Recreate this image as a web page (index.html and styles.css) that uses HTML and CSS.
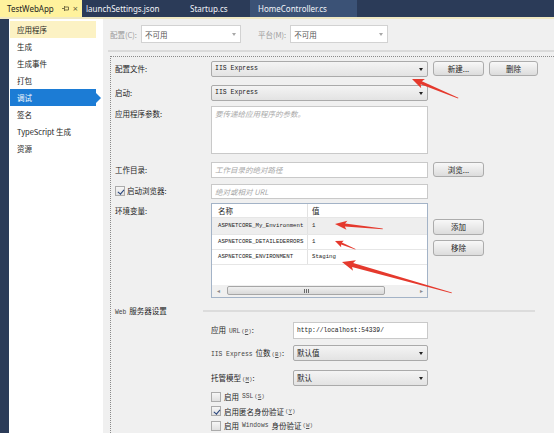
FILE: index.html
```html
<!DOCTYPE html>
<html lang="zh-CN">
<head>
  <meta charset="UTF-8">
  <meta name="viewport" content="width=device-width, initial-scale=1.0">
  <title>TestWebApp - 调试</title>
  <link rel="stylesheet" href="styles.css">
</head>
<body>
<!-- Document tabs -->
<div class="tabbar">
  <div class="tab tab-active">
    <span>TestWebApp</span>
    <svg class="pin" width="7" height="7" viewBox="0 0 7 7">
      <path d="M0 3.5H2.5M2.5 1V6M2.5 2H6.5V5H2.5" fill="none" stroke="#6d6540" stroke-width="0.9"/>
    </svg>
    <span class="close">×</span>
  </div>
  <div class="tab tab-launch">launchSettings.json</div>
  <div class="tab tab-startup">Startup.cs</div>
  <div class="tab tab-home">HomeController.cs</div>
</div>
<div class="tab-line"></div>

<div class="workspace">
  <div class="edge"></div>

  <!-- Project property pages -->
  <ul class="nav">
    <li class="current">应用程序</li>
    <li>生成</li>
    <li>生成事件</li>
    <li>打包</li>
    <li class="active">调试</li>
    <li>签名</li>
    <li>TypeScript 生成</li>
    <li>资源</li>
  </ul>

  <div class="page">
    <div class="config-bar">
      <span class="bar-label">配置(C):</span>
      <div class="combo combo-off">不可用</div>
      <span class="bar-label bar-gap">平台(M):</span>
      <div class="combo combo-off combo-narrow">不可用</div>
    </div>

    <div class="sheet">
      <div class="row">
        <span class="label">配置文件:</span>
        <div class="combo field"><span class="mono">IIS Express</span></div>
        <div class="btn">新建...</div>
        <div class="btn btn-narrow">删除</div>
      </div>

      <div class="row row-8">
        <span class="label">启动:</span>
        <div class="combo field"><span class="mono">IIS Express</span></div>
      </div>

      <div class="row row-5">
        <span class="label">应用程序参数:</span>
        <div class="box field area"><span class="hint">要传递给应用程序的参数。</span></div>
      </div>

      <div class="row row-8">
        <span class="label">工作目录:</span>
        <div class="box field"><span class="hint">工作目录的绝对路径</span></div>
        <div class="btn">浏览...</div>
      </div>

      <div class="row row-6">
        <span class="label label-check"><span class="check checked"></span>启动浏览器:</span>
        <div class="box field field-15"><span class="hint">绝对或相对 URL</span></div>
      </div>

      <div class="row row-4">
        <span class="label">环境变量:</span>
        <div class="grid">
          <div class="grid-head">
            <span class="col-name">名称</span>
            <span class="col-value">值</span>
          </div>
          <div class="grid-row selected">
            <span class="col-name mono-sm">ASPNETCORE_My_Environment</span>
            <span class="col-value mono-sm">1</span>
          </div>
          <div class="grid-row">
            <span class="col-name mono-sm">ASPNETCORE_DETAILEDERRORS</span>
            <span class="col-value mono-sm">1</span>
          </div>
          <div class="grid-row">
            <span class="col-name mono-sm">ASPNETCORE_ENVIRONMENT</span>
            <span class="col-value mono-sm">Staging</span>
          </div>
          <div class="grid-fill"></div>
          <div class="hscroll">
            <span class="arrow">◂</span>
            <div class="track"><div class="thumb"><span class="grip"></span></div></div>
            <span class="arrow">▸</span>
          </div>
        </div>
        <div class="side-buttons">
          <div class="btn">添加</div>
          <div class="btn">移除</div>
        </div>
      </div>

      <div class="section">
        <span class="section-title"><span class="mono-xs word">Web</span>服务器设置</span>
        <span class="section-line"></span>
      </div>

      <div class="server">
        <div class="row row-5">
          <span class="label label-sub">应用<span class="mono-xs word-l">URL</span><span class="key">(<u>P</u>)</span>:</span>
          <div class="box field-sub field-17"><span class="mono-url">http://localhost:54339/</span></div>
        </div>
        <div class="row row-5">
          <span class="label label-sub"><span class="mono-xs word">IIS Express</span>位数<span class="key">(<u>B</u>)</span>:</span>
          <div class="combo field-sub">默认值</div>
        </div>
        <div class="row row-7">
          <span class="label label-sub">托管模型<span class="key">(<u>M</u>)</span>:</span>
          <div class="combo field-sub">默认</div>
        </div>
        <div class="options">
          <div class="option"><span class="check"></span>启用<span class="mono-xs word-l">SSL</span><span class="key">(<u>S</u>)</span></div>
          <div class="option"><span class="check checked"></span>启用匿名身份验证<span class="key">(<u>Y</u>)</span></div>
          <div class="option"><span class="check"></span>启用<span class="mono-xs word-l word">Windows</span>身份验证<span class="key">(<u>W</u>)</span></div>
        </div>
      </div>
    </div>
  </div>
</div>

<!-- Red callout arrows drawn over the form -->
<svg class="marks" width="554" height="433" viewBox="0 0 554 433">
  <g fill="#e5392d">
    <polygon transform="translate(412 79) rotate(22.4)" points="0,0 12,-5 10,-1.6 50,-0.4 50,0.4 10,1.6 12,5"/>
    <polygon transform="translate(335 224) rotate(5.9)" points="0,0 12,-4.5 10,-1.5 48,-0.4 48,0.4 10,1.5 12,4.5"/>
    <polygon transform="translate(335 241) rotate(21.8)" points="0,0 8,-3.5 7,-1.1 22,-0.3 22,0.3 7,1.1 8,3.5"/>
    <polygon transform="translate(342 262) rotate(15.7)" points="0,0 13,-5.5 11,-2 114,-0.4 114,0.4 11,2 13,5.5"/>
  </g>
</svg>
</body>
</html>
```

FILE: styles.css
```css
* {
  box-sizing: border-box;
}
body {
  margin: 0;
  width: 554px;
  height: 433px;
  overflow: hidden;
  position: relative;
  background: #f0f0f0;
  font-family: "Noto Sans CJK SC", "Noto Sans", sans-serif;
  font-size: 7.5px;
  color: #1e1e1e;
}

/* tabs */
.tabbar {
  display: flex;
  height: 17px;
  background: #2b3b58;
  font-family: "Noto Sans", "Noto Sans CJK SC", sans-serif;
  font-size: 8px;
  color: #f2f4f8;
}
.tab {
  display: flex;
  align-items: center;
  height: 17px;
}
.tab-active {
  width: 82px;
  padding-left: 7px;
  background: #fff29d;
  color: #1e1e1e;
}
.pin {
  margin-left: 8px;
}
.close {
  margin-left: 4px;
  font-size: 9px;
  color: #6d6540;
}
.tab-launch {
  width: 100px;
  padding-left: 4px;
}
.tab-startup {
  width: 68px;
  padding-left: 8px;
}
.tab-home {
  width: 107px;
  padding-left: 8px;
  background: #3b5276;
}
.tab-line {
  height: 2px;
  background: #efe8c3;
}

/* layout */
.workspace {
  display: flex;
  height: 414px;
}
.edge {
  width: 9px;
  background: #2b3b58;
}
.nav {
  width: 94px;
  margin: 0;
  padding: 2px 0 0 1px;
  list-style: none;
  background: #fff;
}
.nav li {
  position: relative;
  width: 86px;
  height: 17px;
  line-height: 17px;
  padding-left: 7px;
}
.nav .current {
  background: #fcf2c4;
}
.nav .active {
  background: #1c7cd5;
  color: #fff;
}
.nav .active::after {
  content: "";
  position: absolute;
  right: -5px;
  top: 3.5px;
  border-left: 5px solid #1c7cd5;
  border-top: 5px solid transparent;
  border-bottom: 5px solid transparent;
}
.page {
  flex: 1;
  display: flex;
  flex-direction: column;
}

/* configuration bar */
.config-bar {
  display: flex;
  align-items: center;
  height: 34px;
  margin-left: 5px;
  padding-left: 2px;
  border-bottom: 2px solid #dadada;
}
.bar-label {
  color: #9b9b9b;
  margin-right: 4px;
}
.bar-gap {
  margin-left: 17px;
}

/* combo boxes, text boxes, buttons */
.combo {
  display: flex;
  align-items: center;
  height: 16px;
  padding-left: 3px;
  background: linear-gradient(#f4f4f4, #e3e3e3);
  border: 1px solid #aaaaaa;
  border-radius: 2px;
  position: relative;
}
.combo::after {
  content: "";
  position: absolute;
  right: 4px;
  top: 6px;
  border-top: 3px solid #222;
  border-left: 2.5px solid transparent;
  border-right: 2.5px solid transparent;
}
.combo-off {
  width: 100px;
  height: 18px;
  background: #fff;
  border-color: #d2d2d2;
  border-radius: 0;
  color: #555;
}
.combo-off::after {
  top: 7px;
  border-top-color: #a8a8a8;
}
.combo-narrow {
  width: 98px;
}
.box {
  display: flex;
  align-items: center;
  height: 16px;
  padding-left: 3px;
  background: #fff;
  border: 1px solid #c9c9c9;
}
.btn {
  display: flex;
  align-items: center;
  justify-content: center;
  width: 51px;
  height: 15px;
  margin-left: 5px;
  background: linear-gradient(#f8f8f8, #dcdcdc);
  border: 1px solid #acacac;
  border-radius: 3px;
}
.btn-narrow {
  width: 49px;
}
.hint {
  color: #a9a9a9;
  font-style: italic;
}
.mono,
.mono-sm,
.mono-xs,
.mono-url {
  font-family: "Liberation Mono", "DejaVu Sans Mono", monospace;
  color: #222;
}
.mono {
  font-size: 6.5px;
}
.mono-sm {
  font-size: 5.7px;
}
.mono-xs {
  font-size: 6.3px;
  color: #444;
}
.word {
  margin-right: 3px;
}
.word-l {
  margin-left: 3px;
}
.mono-url {
  font-size: 6.3px;
}
.key {
  font-family: "Liberation Mono", monospace;
  font-size: 5.8px;
  color: #555;
  margin-left: 1px;
}

/* debug sheet */
.sheet {
  flex: 1;
  margin: 4px 0 0 7px;
  padding: 4px 0 0 4px;
  border-top: 1px dotted #8a8a8a;
  border-left: 1px dotted #8a8a8a;
}
.row {
  display: flex;
  align-items: flex-start;
}
.row-4 { margin-top: 4px; }
.row-5 { margin-top: 5px; }
.row-6 { margin-top: 6px; }
.row-7 { margin-top: 7px; }
.row-8 { margin-top: 8px; }
.label {
  flex: none;
  width: 96px;
  line-height: 16px;
}
.label-check {
  display: flex;
  align-items: center;
  height: 15px;
}
.field {
  width: 217px;
}
.field-15 {
  height: 15px;
}
.area {
  height: 48px;
  align-items: flex-start;
  padding-top: 1px;
}

/* environment variables grid */
.grid {
  display: flex;
  flex-direction: column;
  width: 217px;
  height: 95px;
  background: #fff;
  border: 1px solid #a3b3c7;
}
.grid-head,
.grid-row {
  display: flex;
  align-items: center;
}
.grid-head {
  height: 13px;
}
.grid-row {
  height: 15px;
  border-top: 1px solid #e6e6e6;
}
.grid-row.selected {
  height: 17px;
  background: #eeeeee;
}
.col-name {
  width: 96px;
  height: 100%;
  display: flex;
  align-items: center;
  padding-left: 6px;
  border-right: 1px solid #e2e2e2;
}
.col-value {
  padding-left: 4px;
}
.grid-fill {
  flex: 1;
  border-top: 1px solid #e6e6e6;
}
.hscroll {
  display: flex;
  align-items: center;
  height: 12px;
  background: #f0f0f0;
}
.arrow {
  width: 12px;
  text-align: center;
  font-size: 6px;
  color: #8a8a8a;
}
.track {
  flex: 1;
  padding-left: 3px;
}
.thumb {
  display: flex;
  align-items: center;
  justify-content: center;
  width: 158px;
  height: 9px;
  background: linear-gradient(#f0f0f0, #d9d9d9);
  border: 1px solid #a6a6a6;
  border-radius: 2px;
}
.grip {
  width: 5px;
  height: 4px;
  background: repeating-linear-gradient(to right, #6a6a6a 0 1px, transparent 1px 2px);
}
.side-buttons {
  display: flex;
  flex-direction: column;
  gap: 5px;
  padding-top: 16px;
}
.side-buttons .btn {
  height: 16px;
}

/* web server section */
.section {
  display: flex;
  align-items: center;
  height: 12px;
  margin-top: 7px;
}
.section-title {
  width: 88px;
}
.section-line {
  width: 332px;
  height: 2px;
  background: #dcdcdc;
}
.server {
  margin-left: 96px;
}
.label-sub {
  width: 82px;
}
.field-sub {
  width: 135px;
}
.field-17 {
  height: 17px;
}
.options {
  margin-top: 2px;
}
.option {
  display: flex;
  align-items: center;
  height: 14.5px;
}
.check {
  flex: none;
  position: relative;
  width: 10px;
  height: 10px;
  margin-right: 2px;
  background: linear-gradient(#f6f6f6, #e0e0e0);
  border: 1px solid #ababab;
}
.option .check {
  margin-right: 3px;
}
.check.checked::after {
  content: "";
  position: absolute;
  left: 2.5px;
  top: 0.5px;
  width: 2.5px;
  height: 5px;
  border-right: 1.4px solid #24417a;
  border-bottom: 1.4px solid #24417a;
  transform: rotate(40deg);
}

/* annotation layer */
.marks {
  position: absolute;
  left: 0;
  top: 0;
  pointer-events: none;
}
```
